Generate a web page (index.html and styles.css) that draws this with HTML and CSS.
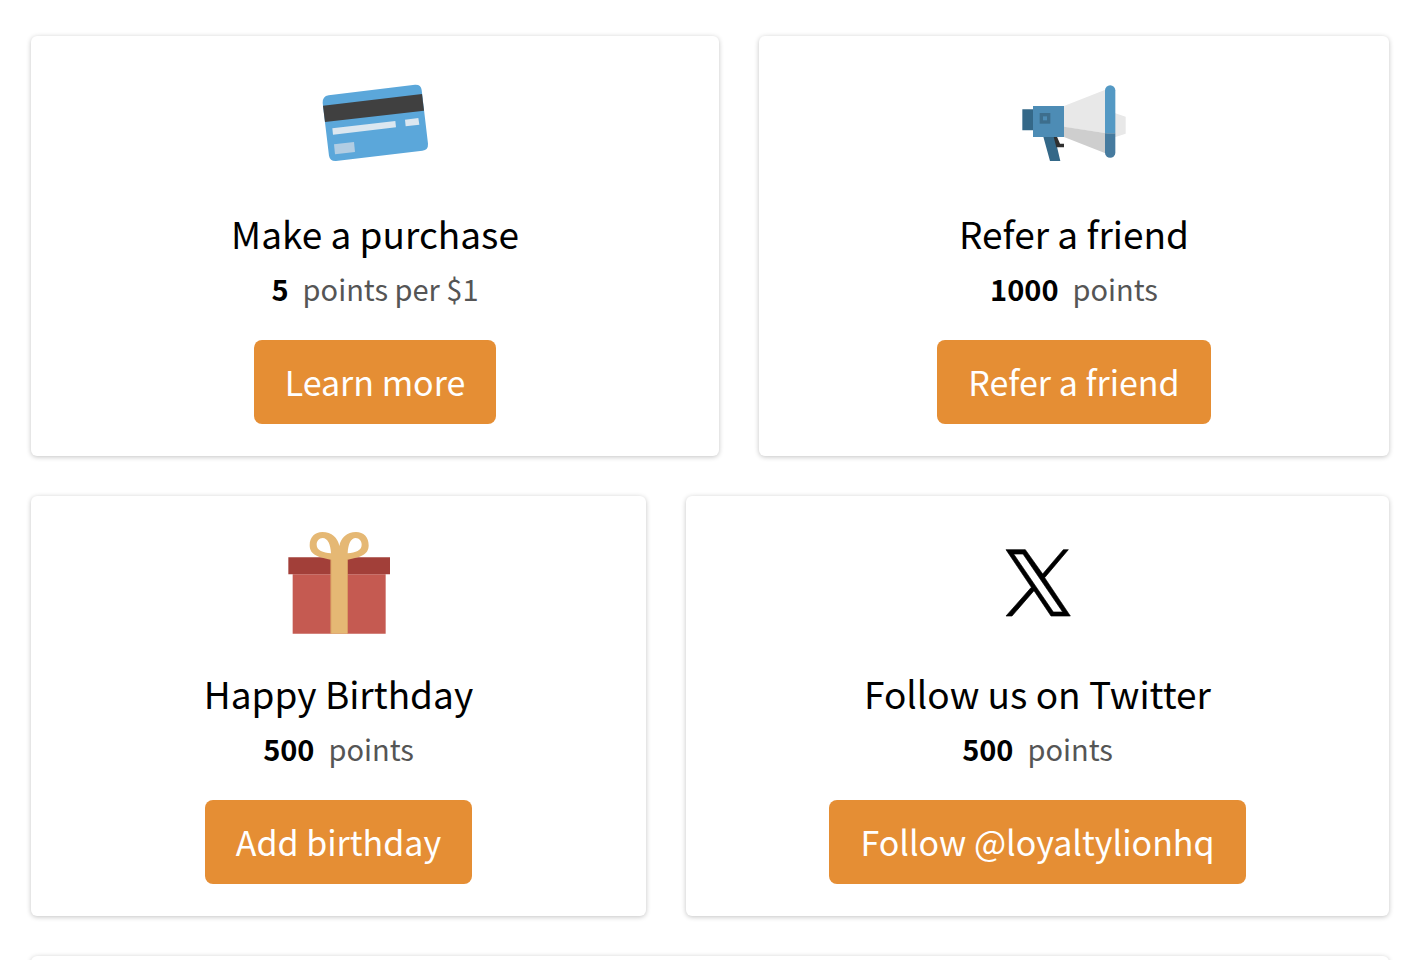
FILE: index.html
```html
<!DOCTYPE html>
<html lang="en">
<head>
<meta charset="utf-8">
<meta name="viewport" content="width=device-width, initial-scale=1">
<title>Earn points</title>
<link rel="stylesheet" href="styles.css">
</head>
<body>
<main class="rewards">
  <div class="row">
    <article class="card card-purchase">
      <svg class="icon" viewBox="30 -21 330 330" aria-hidden="true">
        <path fill="#5ba7da" d="M56 61 315 29q18-1 20 16L354 206q1 19-17 21L78 258q-18 1-21-16L38 84q-1-20 18-23z"/>
        <path fill="#404040" d="M39 92 336 57 342 107 45 141z"/>
        <path fill="#dbe7f0" d="M67 160 256 138 258 157 69 179zM285 134 325 129 328 149 287 154z"/>
        <path fill="#b1cde3" d="M72 208 132 201 135 231 75 238z"/>
      </svg>
      <h2 class="title">Make a purchase</h2>
      <p class="points"><strong class="amount">5</strong>points per $1</p>
      <button class="action" type="button">Learn more</button>
    </article>
    <article class="card card-refer">
      <svg class="icon" viewBox="27 -21 330 330" aria-hidden="true">
        <path fill="#e8e8e8" d="M162 93 290 43V175L162 156zM314 114 347 125V176L314 187z"/>
        <path fill="#cecece" d="M162 155 290 175V236L162 186z"/>
        <path fill="#346888" d="M37 103H69V166H37zM100 185H134L151 258H120z"/>
        <path fill="#303030" d="M131 185H141L150 206H162V217H139z"/>
        <path fill="#4d8cb5" d="M69 93H162V186H69z"/>
        <path fill="#3d6e8d" d="M89 114H121V146H89z"/>
        <path fill="#4d8cb5" d="M99 124H111V136H99z"/>
        <path fill="#5499c4" d="M285 175V46a15 15 0 0 1 31 0V175z"/>
        <path fill="#467b9f" d="M285 175H316V233a15 15 0 0 1-31 0z"/>
      </svg>
      <h2 class="title">Refer a friend</h2>
      <p class="points"><strong class="amount">1000</strong>points</p>
      <button class="action" type="button">Refer a friend</button>
    </article>
  </div>
  <div class="row">
    <article class="card card-birthday">
      <svg class="icon" viewBox="27 24 330 330" aria-hidden="true">
        <path fill="#c55a51" d="M53 163H332V341H53z"/>
        <path fill="#a23f39" d="M40 112H345V163H40z"/>
        <path fill="#e5b874" fill-rule="evenodd" d="M167 341V119C132 112 104 106 104 76 104 51 120 36 142 36 170 36 189 54 193 78 197 54 216 36 243 36 266 36 281 51 281 76 281 106 254 112 218 119V341zM168 100C167 73 158 54 143 54 132 54 125 63 125 74 125 92 144 97 168 100zM218 100C242 97 260 92 260 74 260 63 253 54 242 54 227 54 219 73 218 100z"/>
        <path fill="#d99e60" d="M167 119H169V341H167zM216 119H218V341H216z"/>
      </svg>
      <h2 class="title">Happy Birthday</h2>
      <p class="points"><strong class="amount">500</strong>points</p>
      <button class="action" type="button">Add birthday</button>
    </article>
    <article class="card card-follow">
      <svg class="icon" viewBox="-21 -21 330 330" aria-hidden="true">
        <path fill="#000" stroke="#000" stroke-width="2" fill-rule="evenodd" d="M48 44H106L158 117 220 44H235L164 128 241 243H183L132 167 66 243H48L124 157zM71 57 190 231H218L99 57z"/>
      </svg>
      <h2 class="title">Follow us on Twitter</h2>
      <p class="points"><strong class="amount">500</strong>points</p>
      <button class="action" type="button">Follow @loyaltylionhq</button>
    </article>
  </div>
  <div class="row">
    <article class="card"></article>
  </div>
</main>
</body>
</html>
```
FILE: styles.css
```css
* {
  box-sizing: border-box;
}

body {
  margin: 0;
  height: 100vh;
  overflow: hidden;
  background: #fff;
  color: #000;
  font-family: "Source Sans Pro", "Noto Sans CJK SC", sans-serif;
}

.rewards {
  display: flex;
  flex-direction: column;
  gap: 40px;
  padding: 36px 33px 36px 31px;
}

.row {
  display: flex;
  gap: 40px;
}

.card {
  display: flex;
  flex: 1 1 0;
  flex-direction: column;
  align-items: center;
  min-width: 0;
  padding: 32px;
  border-radius: 6px;
  background: #fff;
  box-shadow: 0 1px 5px rgba(0, 0, 0, 0.24);
}

.card-purchase {
  flex-grow: 624;
}

.card-refer {
  flex-grow: 566;
}

.card-birthday {
  flex-grow: 551;
}

.card-follow {
  flex-grow: 639;
}

.icon {
  display: block;
  width: 110px;
  height: 110px;
}

.title {
  margin: 29px 0 9px;
  font-size: 37px;
  font-weight: 400;
  line-height: 52px;
}

.points {
  margin: 0 0 32px;
  color: #555;
  font-size: 29px;
  line-height: 40px;
}

.amount {
  margin-right: 14px;
  color: #000;
  font-weight: 700;
}

.action {
  padding: 16px 31px;
  border: 0;
  border-radius: 8px;
  background: #e58e34;
  color: #fff;
  font-family: inherit;
  font-size: 34px;
  font-weight: 400;
  line-height: 52px;
  cursor: pointer;
}
```
